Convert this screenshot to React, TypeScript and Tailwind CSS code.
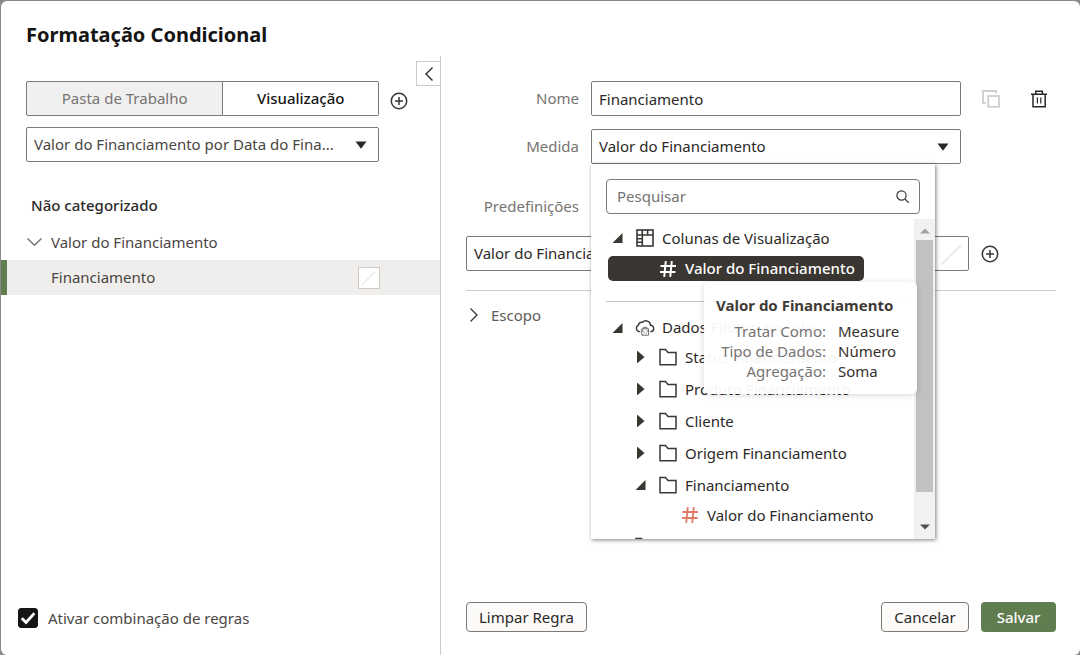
import type { ReactNode } from "react";

function Caret() {
  return (
    <svg className="mr-3 h-2 w-3 self-center justify-self-end pointer-events-none [grid-area:1/1]" viewBox="0 0 12 8" aria-hidden="true">
      <path d="M0.5 0.5h11L6 7.8z" fill="#2b2927" />
    </svg>
  );
}

function SelectBox({ id, label, value, tone, children }: { id: string; label?: string; value: string; tone: string; children?: ReactNode }) {
  return (
    <div className="grid grid-cols-1">
      <select
        id={id}
        aria-label={label}
        className={"h-[35px] w-full appearance-none rounded-xs border border-[#7d7975] bg-white pl-[7px] pr-8 outline-none [grid-area:1/1] " + tone}
      >
        <option>{value}</option>
      </select>
      {children ?? <Caret />}
    </div>
  );
}

function PlusCircle() {
  return (
    <svg className="size-[18px]" viewBox="0 0 18 18" fill="none" stroke="#3a3632" strokeWidth="1.5" aria-hidden="true">
      <circle cx="9" cy="9" r="7.7" />
      <path d="M9 5v8M5 9h8" />
    </svg>
  );
}

function CopyIcon() {
  return (
    <svg className="size-[18px]" viewBox="0 0 18 18" fill="none" stroke="#cfcecc" strokeWidth="1.8" aria-hidden="true">
      <path d="M14 3.500V1H1v12.200h3" />
      <rect x="6.2" y="6" width="10.8" height="10.8" />
    </svg>
  );
}

function TrashIcon() {
  return (
    <svg className="size-[18px]" viewBox="0 0 18 18" fill="none" stroke="#2b2927" strokeWidth="1.5" aria-hidden="true">
      <path d="M1 4.3h16M5.8 4V1.2h6.6V4M3 4.5v12.2h12.2V4.5" />
      <path d="M7.4 7.5v6M10.8 7.5v6" strokeWidth="1.2" />
    </svg>
  );
}

function SlashMark() {
  return (
    <svg className="size-full" viewBox="0 0 22 22" aria-hidden="true">
      <path d="M3 19L18 4" stroke="#eeedec" strokeWidth="1.8" />
    </svg>
  );
}

function ColumnsIcon() {
  return (
    <svg className="size-[18px]" viewBox="0 0 18 18" fill="none" stroke="#3a3632" strokeWidth="1.6" aria-hidden="true">
      <rect x="1" y="1" width="16" height="16" />
      <path d="M1 6h16M6.3 1v16M11.6 1v5M1 9.7h5.3M1 13.3h5.3" />
    </svg>
  );
}

function CloudIcon() {
  return (
    <svg className="h-[18px] w-[22px]" viewBox="0 0 22 18" fill="none" stroke="#3a3632" strokeWidth="1.4" aria-hidden="true">
      <path d="M6.3 12.6H5A3.4 3.4 0 0 1 4.4 6.200A3.600 3.600 0 0 1 8.500 3.300A4.600 4.600 0 0 1 16.500 6.200A3.300 3.300 0 0 1 17.500 12.600H16.300" />
      <path d="M7.800 9.800h6.800v6.400H7.800zM9.500 9.800v-1.500h3.400v1.500M7.800 11.900h2M12.600 11.900h2M9.900 13.900h1M11.900 13.900h1" stroke="#5f5b58" strokeWidth="0.9" />
    </svg>
  );
}

function FolderIcon() {
  return (
    <svg className="h-[18px] w-[18px]" viewBox="0 0 18 18" fill="none" stroke="#3a3632" strokeWidth="1.5" aria-hidden="true">
      <path d="M1 1.500h5.500L9 4.500h8v12.300H1z" />
    </svg>
  );
}

function HashIcon({ color, weight }: { color: string; weight: number }) {
  return (
    <svg className="size-[18px]" viewBox="0 0 18 18" fill="none" stroke={color} strokeWidth={weight} aria-hidden="true">
      <path d="M6.800 1.200L5.200 16.800M12.800 1.200L11.200 16.800M1.500 6h15.500M1 12h15.500" />
    </svg>
  );
}

function Twisty({ open }: { open: boolean }) {
  return (
    <svg className="size-3" viewBox="0 0 12 12" fill="#3a3632" aria-hidden="true">
      {open ? <path d="M10.500 1v10H0.500z" /> : <path d="M2 -0.500L9.500 6L2 12.500z" />}
    </svg>
  );
}

function FolderRow({ name, open = false }: { name: string; open?: boolean }) {
  return (
    <li className="flex h-8 items-center pl-11">
      <Twisty open={open} />
      <span className="ml-3">
        <FolderIcon />
      </span>
      <span className="ml-2">{name}</span>
    </li>
  );
}

function Tooltip() {
  return (
    <div role="tooltip" className="absolute top-[118px] left-[113px] h-[112px] w-[213px] rounded-[5px] bg-white/95 px-3 pt-[11px] shadow-[0_1px_6px_rgba(0,0,0,0.16)]">
      <p className="font-bold leading-6 whitespace-nowrap text-[#3f3a36]">Valor do Financiamento</p>
      <dl className="mt-1 grid grid-cols-[110px_1fr] gap-x-3 leading-5 text-[#35312e]">
        <dt className="text-right text-[#767371]">Tratar Como:</dt>
        <dd>Measure</dd>
        <dt className="text-right text-[#767371]">Tipo de Dados:</dt>
        <dd>Número</dd>
        <dt className="text-right text-[#767371]">Agregação:</dt>
        <dd>Soma</dd>
      </dl>
    </div>
  );
}

function MeasureMenu() {
  return (
    <div className="absolute top-full left-0 z-10 flex h-[375px] w-[344px] flex-col bg-white pt-[15px] text-[#2b2927] shadow-[1px_1px_4px_rgba(0,0,0,0.5)]">
      <div className="mx-[15px] grid grid-cols-1">
        <input
          type="search"
          aria-label="Pesquisar"
          placeholder="Pesquisar"
          className="h-[35px] w-full rounded border border-[#7d7975] pl-[10px] pr-9 pb-px outline-none placeholder:text-[#767371] [grid-area:1/1]"
        />
        <svg className="mr-[10px] size-[14px] self-center justify-self-end [grid-area:1/1]" viewBox="0 0 14 14" fill="none" stroke="#3a3632" strokeWidth="1.2" aria-hidden="true">
          <circle cx="5.500" cy="5.500" r="4.600" />
          <path d="M9 9L12.800 12.800" />
        </svg>
      </div>
      <div className="mt-[5px] flex min-h-0 flex-1">
        <ul className="flex-1 overflow-hidden pt-1 whitespace-nowrap">
          <li className="flex h-[30px] items-center pl-[21px]">
            <Twisty open />
            <span className="ml-3">
              <ColumnsIcon />
            </span>
            <span className="ml-2">Colunas de Visualização</span>
          </li>
          <li className="mt-[3px] ml-[17px] flex h-[25px] w-64 items-center rounded-[5px] bg-[#3a3632] pl-[51px] font-medium text-white">
            <HashIcon color="#ffffff" weight={2} />
            <span className="ml-2">Valor do Financiamento</span>
          </li>
          <li role="separator" className="mt-5 ml-[15px] mr-2 h-px bg-[#c9c5bd]" />
          <li className="mt-3 flex h-[27px] items-center pl-[21px]">
            <Twisty open />
            <span className="ml-[10px]">
              <CloudIcon />
            </span>
            <span className="ml-1.5">Dados Financiamento</span>
          </li>
          <FolderRow name="Status Financiamento" />
          <FolderRow name="Produto Financiamento" />
          <FolderRow name="Cliente" />
          <FolderRow name="Origem Financiamento" />
          <FolderRow name="Financiamento" open />
          <li className="flex h-7 items-center pl-[90px]">
            <HashIcon color="#e07a66" weight={1.8} />
            <span className="ml-2">Valor do Financiamento</span>
          </li>
          <li className="flex h-[34px] items-center pl-11">
            <FolderIcon />
          </li>
        </ul>
        <div className="flex w-[21px] flex-col items-center bg-[#f1f1f1] py-2" aria-hidden="true">
          <svg className="mb-[5px] h-2 w-[10px] shrink-0" viewBox="0 0 10 8">
            <path d="M0 6.500L5 1.500L10 6.500z" fill="#a3a3a3" />
          </svg>
          <div className="h-[252px] w-[17px] shrink-0 bg-[#c1c1c1]" />
          <svg className="mt-auto h-2 w-[10px] shrink-0" viewBox="0 0 10 8">
            <path d="M0 1.500L5 6.500L10 1.500z" fill="#505050" />
          </svg>
        </div>
      </div>
      <Tooltip />
    </div>
  );
}

function RulesPanel() {
  return (
    <aside className="flex w-[440px] shrink-0 flex-col border-r border-[#d0ccc4]">
      <div className="flex items-start">
        <div className="mt-[25px] ml-[25px] flex h-[35px] flex-1">
          <button type="button" className="flex-[197] rounded-l-xs border border-[#7d7975] bg-[#f0f0f0] text-[#767371]">
            Pasta de Trabalho
          </button>
          <button type="button" className="flex-[156] rounded-r-xs border border-l-0 border-[#7d7975] bg-white font-medium text-[#161513]">
            Visualização
          </button>
        </div>
        <button type="button" aria-label="Adicionar regra" className="mt-9 ml-[11px]">
          <PlusCircle />
        </button>
        <button type="button" aria-label="Recolher painel" className="mt-[5px] ml-2 flex h-[25px] w-6 items-center justify-center border border-r-0 border-[#d0ccc4]">
          <svg className="h-[14px] w-2" viewBox="0 0 8 14" fill="none" stroke="#2b2927" strokeWidth="1.400" aria-hidden="true">
            <path d="M7.500 0.500L1 7l6.500 6.500" />
          </svg>
        </button>
      </div>
      <div className="mt-[11px] mr-[61px] ml-[25px]">
        <SelectBox id="visualization" label="Visualização" value="Valor do Financiamento por Data do Fina..." tone="text-[#4a4643]" />
      </div>
      <h2 className="mt-[31px] ml-[30px] leading-6 font-medium text-[#2b2927]">Não categorizado</h2>
      <div className="mt-[13px] flex h-6 items-center pl-[26px] text-[#4a4643]">
        <svg className="h-2 w-[15px]" viewBox="0 0 15 8" fill="none" stroke="#767371" strokeWidth="1.500" aria-hidden="true">
          <path d="M0.500 0.500L7.500 7.200L14.500 0.500" />
        </svg>
        <span className="ml-[9px]">Valor do Financiamento</span>
      </div>
      <div className="mt-[6px] flex h-[35px] items-center justify-between border-l-[6px] border-[#5f7d4f] bg-[#f0eeec] pr-[60px] pl-11 text-[#4a4643]">
        <span>Financiamento</span>
        <span className="size-[22px] border border-[#d0ccc4] bg-white">
          <SlashMark />
        </span>
      </div>
      <label className="mt-auto mb-[25px] ml-[17px] flex items-center gap-[10px] leading-6 text-[#4a4643]">
        <span className="grid size-5">
          <input type="checkbox" defaultChecked className="size-5 appearance-none rounded-[3px] border border-[#161513] checked:bg-[#161513] [grid-area:1/1]" />
          <svg className="pointer-events-none size-5 [grid-area:1/1]" viewBox="0 0 20 20" fill="none" stroke="#fff" strokeWidth="2.800" aria-hidden="true">
            <path d="M3.800 10.200L8 14.400L16.400 5.200" />
          </svg>
        </span>
        Ativar combinação de regras
      </label>
    </aside>
  );
}

function RuleEditor() {
  return (
    <section className="flex min-w-0 flex-1 flex-col pt-[25px] pr-6 pb-[23px] pl-[25px]">
      <div className="grid grid-cols-[113px_1fr_83px] items-center gap-x-3 gap-y-[13px]">
        <label htmlFor="name" className="text-right text-[#767371]">
          Nome
        </label>
        <input id="name" type="text" defaultValue="Financiamento" className="h-[35px] w-full rounded-xs border border-[#7d7975] px-[7px] text-[#2b2927] outline-none" />
        <div className="flex gap-[30px] pl-[9px]">
          <button type="button" aria-label="Duplicar regra" disabled>
            <CopyIcon />
          </button>
          <button type="button" aria-label="Excluir regra">
            <TrashIcon />
          </button>
        </div>
        <label htmlFor="measure" className="text-right text-[#767371]">
          Medida
        </label>
        <div className="relative">
          <SelectBox id="measure" value="Valor do Financiamento" tone="text-[#2b2927]" />
          <MeasureMenu />
        </div>
      </div>
      <label htmlFor="preset" className="mt-[30px] w-[113px] text-right leading-6 text-[#767371]">
        Predefinições
      </label>
      <div className="mt-[18px] flex items-center">
        <div className="flex-1">
          <SelectBox id="preset" value="Valor do Financiamento" tone="text-[#2b2927]">
            <span className="mr-[3px] size-7 self-center justify-self-end pointer-events-none [grid-area:1/1]">
              <SlashMark />
            </span>
          </SelectBox>
        </div>
        <button type="button" aria-label="Adicionar condição" className="mr-[57px] ml-3">
          <PlusCircle />
        </button>
      </div>
      <button type="button" className="mt-[19px] flex items-center border-t border-[#d0ccc4] pt-3 pl-1 leading-6 text-[#5f5b58]">
        <svg className="h-[14px] w-2" viewBox="0 0 8 14" fill="none" stroke="#3a3632" strokeWidth="1.300" aria-hidden="true">
          <path d="M0.500 0.500L7 7l-6.500 6.500" />
        </svg>
        <span className="ml-[13px]">Escopo</span>
      </button>
      <footer className="mt-auto flex justify-between">
        <button type="button" className="h-[30px] rounded border border-[#7d7975] bg-[#fcfbfa] px-3 text-[#2b2927]">
          Limpar Regra
        </button>
        <div className="flex gap-3">
          <button type="button" className="h-[30px] min-w-[88px] rounded border border-[#7d7975] bg-[#fcfbfa] px-3 text-[#2b2927]">
            Cancelar
          </button>
          <button type="button" className="h-[30px] min-w-[75px] rounded bg-[#5f7d4f] px-3 font-medium text-white">
            Salvar
          </button>
        </div>
      </footer>
    </section>
  );
}

export default function App() {
  return (
    <div className="flex min-h-screen bg-[#8c8a88] pt-px pl-px font-['Noto_Sans',sans-serif] text-[15px]">
      <main role="dialog" aria-labelledby="dialog-title" className="flex flex-1 flex-col rounded-md bg-white">
        <h1 id="dialog-title" className="h-[55px] pt-5 pl-[25px] text-[20px] leading-7 font-bold text-[#161513]">
          Formatação Condicional
        </h1>
        <div className="flex flex-1">
          <RulesPanel />
          <RuleEditor />
        </div>
      </main>
    </div>
  );
}
